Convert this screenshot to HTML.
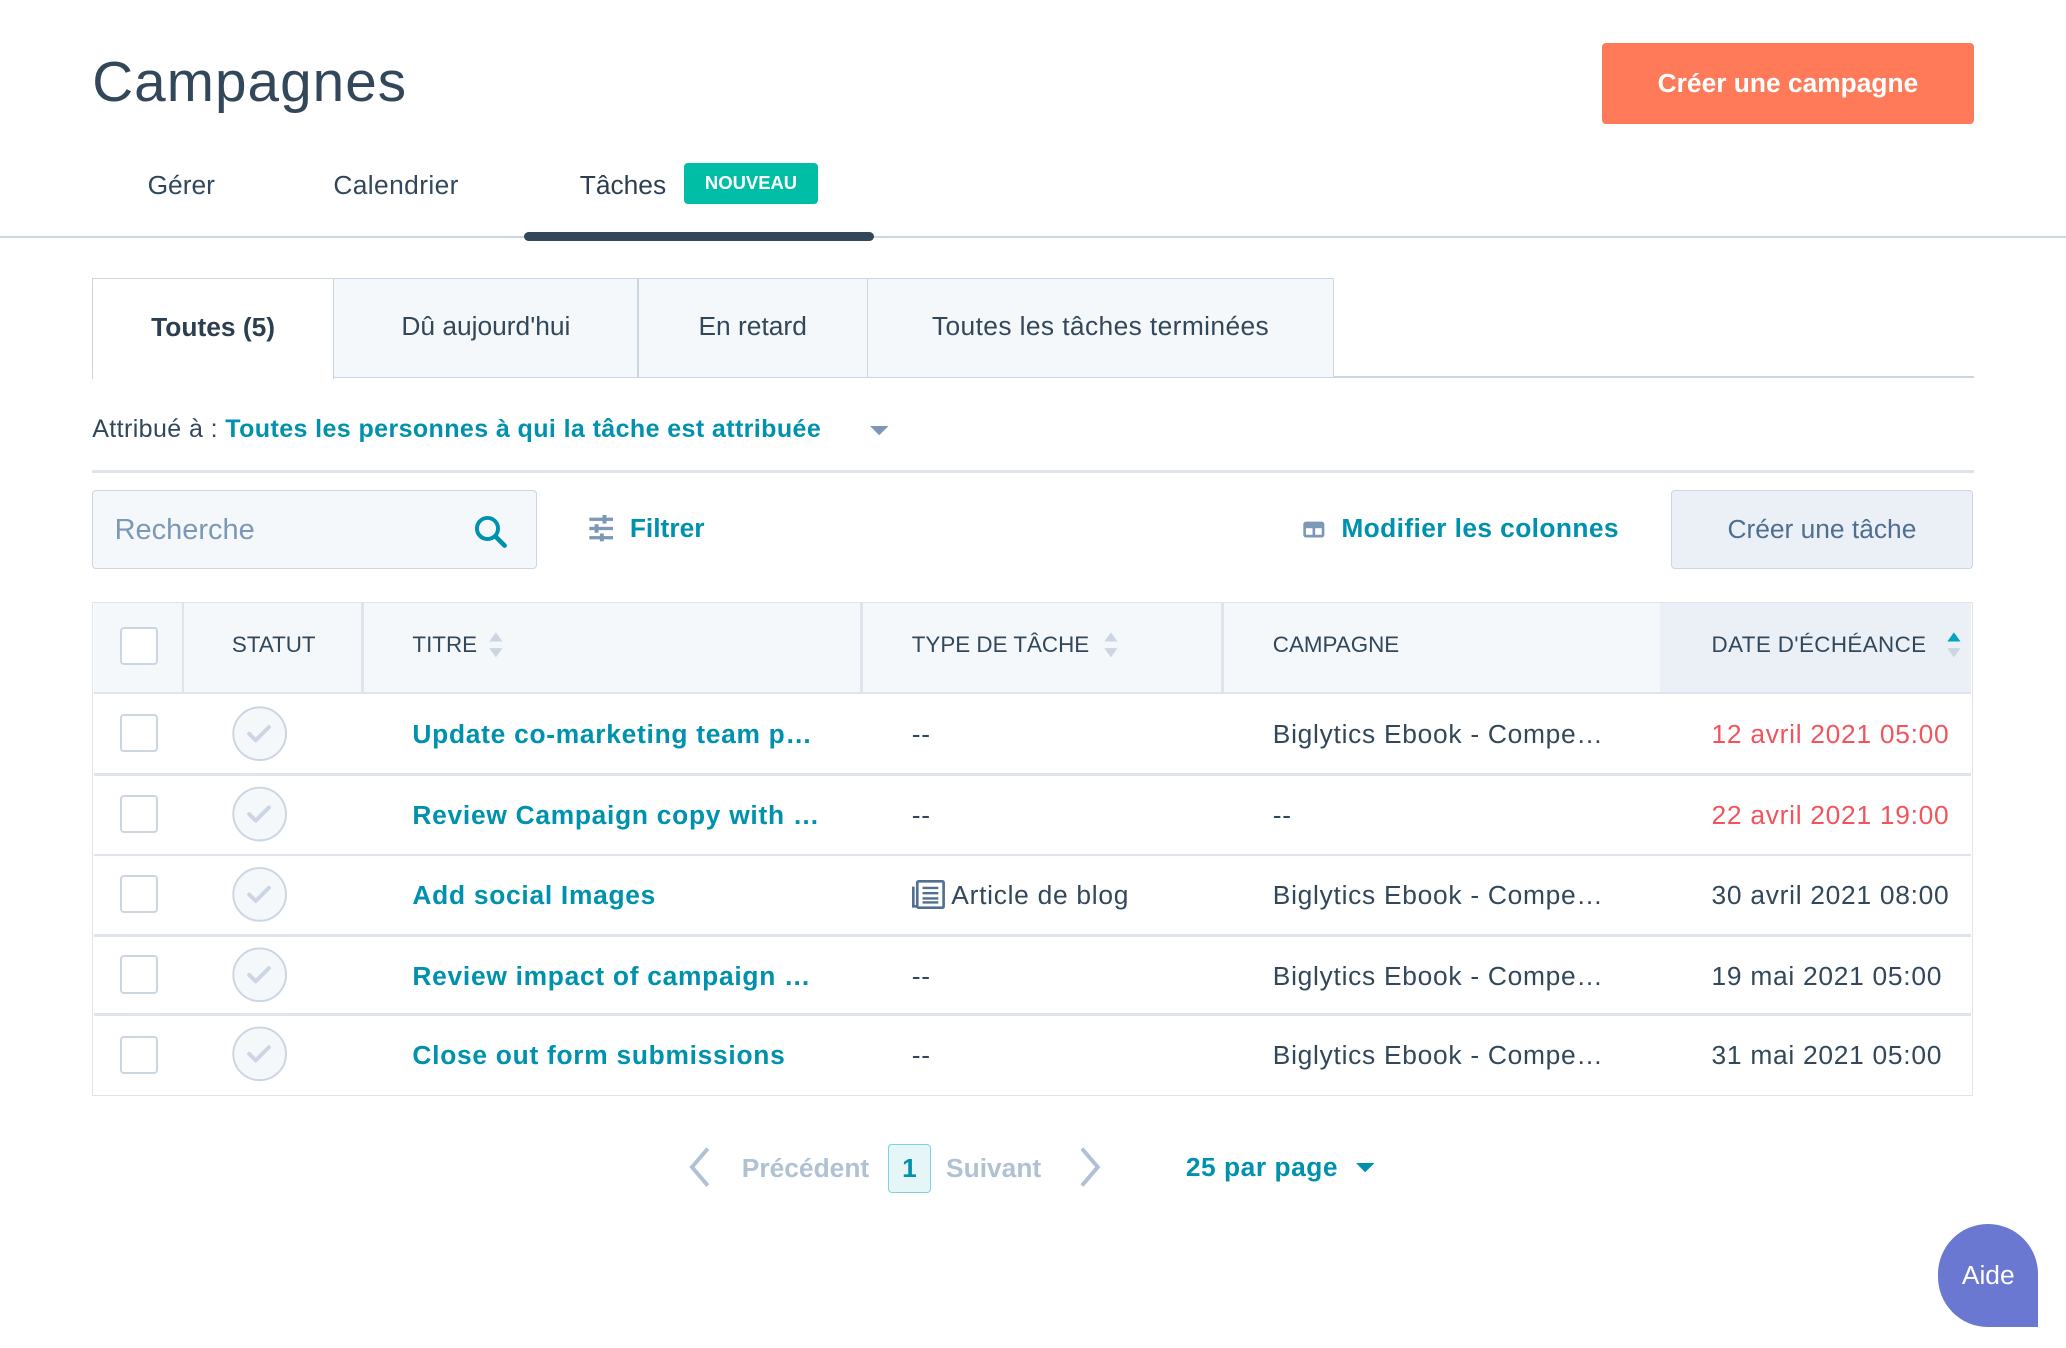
<!DOCTYPE html>
<html><head><meta charset="utf-8">
<style>
html,body{margin:0;padding:0;background:#fff;overflow:hidden}
body{width:2066px;height:1348px}
#r{position:relative;width:1568px;height:1023px;zoom:1.3176;font-family:"Liberation Sans",sans-serif;color:#33475b}
.a{position:absolute;white-space:nowrap}
.teal{color:#0091ae}
.row{letter-spacing:0.55px}
.cb{position:absolute;width:26px;height:26px;border:2px solid #cbd6e2;border-radius:3px;background:#fff}
.hl{position:absolute;height:2px;background:#dfe3eb}
.vl{position:absolute;width:2px;background:#dfe3eb}
</style></head><body><div id="r">

<div class="a" style="left:70px;top:38px;font-size:43px;font-weight:normal;letter-spacing:0.8px;color:#33475b">Campagnes</div>
<div class="a" style="left:1216px;top:33px;width:282px;height:61px;background:#ff7a59;border-radius:3px;color:#fff;font-size:20px;font-weight:bold;line-height:61px;text-align:center">Créer une campagne</div>

<div class="a" style="left:112px;top:129px;font-size:20px">Gérer</div>
<div class="a" style="left:253px;top:129px;font-size:20px;letter-spacing:0.3px">Calendrier</div>
<div class="a" style="left:440px;top:129px;font-size:20px;color:#2d3e50">Tâches</div>
<div class="a" style="left:519px;top:124px;width:102px;height:31px;background:#00bda5;border-radius:3px;color:#fff;font-size:14px;font-weight:bold;line-height:31px;text-align:center">NOUVEAU</div>
<div class="a" style="left:0;top:179px;width:1568px;height:2px;background:#cbd6e2"></div>
<div class="a" style="left:398px;top:176px;width:265px;height:7px;background:#33475b;border-radius:4px"></div>

<div class="a" style="left:253px;top:285px;width:1245px;height:2px;background:#cbd6e2"></div>
<div class="a" style="left:70px;top:211px;width:182px;height:76px;background:#fff;border:1px solid #cbd6e2;border-bottom:none;font-size:20px;font-weight:bold;line-height:74px;text-align:center;color:#2d3e50">Toutes (5)</div>
<div class="a" style="left:253px;top:211px;width:230px;height:74px;background:#f5f8fa;border:1px solid #cbd6e2;font-size:20px;line-height:72px;text-align:center">Dû aujourd'hui</div>
<div class="a" style="left:484px;top:211px;width:173px;height:74px;background:#f5f8fa;border:1px solid #cbd6e2;font-size:20px;line-height:72px;text-align:center">En retard</div>
<div class="a" style="left:658px;top:211px;width:353px;height:74px;background:#f5f8fa;border:1px solid #cbd6e2;font-size:20px;line-height:72px;text-align:center;letter-spacing:0.3px">Toutes les tâches terminées</div>

<div class="a" style="left:70px;top:315px;font-size:19px;letter-spacing:0.3px">Attribué à : <span class="teal" style="font-weight:bold">Toutes les personnes à qui la tâche est attribuée</span></div>
<svg class="a" style="left:660px;top:323px" width="14" height="8"><path d="M0 0h14L7 7z" fill="#7c98b6"/></svg>
<div class="a" style="left:70px;top:357px;width:1428px;height:2px;background:#dfe3eb"></div>

<div class="a" style="left:70px;top:372px;width:336px;height:58px;background:#f5f8fa;border:1px solid #cbd6e2;border-radius:3px"></div>
<div class="a" style="left:87px;top:390px;font-size:22px;color:#7c98b6">Recherche</div>
<svg class="a" style="left:359px;top:390px" width="28" height="28" viewBox="0 0 28 28"><circle cx="11" cy="11" r="8" fill="none" stroke="#0091ae" stroke-width="3"/><path d="M17 17l7 7" stroke="#0091ae" stroke-width="3.5" stroke-linecap="round"/></svg>

<svg class="a" style="left:446px;top:391px" width="20" height="20" viewBox="0 0 20 20" fill="#7c98b6"><rect x="1" y="2" width="18" height="2.5"/><rect x="1" y="9" width="18" height="2.5"/><rect x="1" y="16" width="18" height="2.5"/><rect x="11" y="0" width="3" height="6.5"/><rect x="5" y="7" width="3" height="6.5"/><rect x="9" y="14" width="3" height="6"/></svg>
<div class="a teal" style="left:478px;top:389px;font-size:20px;font-weight:bold">Filtrer</div>

<svg class="a" style="left:988px;top:394px" width="18" height="16" viewBox="0 0 18 16"><rect x="1" y="2" width="16" height="12" rx="2" fill="#7c98b6"/><rect x="3" y="7" width="5" height="5" fill="#fff"/><rect x="10" y="7" width="5" height="5" fill="#fff"/></svg>
<div class="a teal" style="left:1018px;top:389px;font-size:20px;font-weight:bold;letter-spacing:0.3px">Modifier les colonnes</div>

<div class="a" style="left:1268px;top:372px;width:228px;height:58px;background:#eaf0f6;border:1px solid #cbd6e2;border-radius:3px;font-size:20px;line-height:58px;text-align:center;color:#506e91">Créer une tâche</div>

<!-- table -->
<div class="a" style="left:70px;top:457px;width:1426px;height:373px;border:1px solid #dfe3eb;background:#fff"></div>
<div class="a" style="left:71px;top:458px;width:1425px;height:67px;background:#f5f8fa"></div>
<div class="a" style="left:1260px;top:458px;width:236px;height:67px;background:#eaf0f6"></div>
<div class="hl" style="left:71px;top:525px;width:1425px"></div>
<div class="vl" style="left:138px;top:458px;height:67px"></div>
<div class="vl" style="left:274px;top:458px;height:67px"></div>
<div class="vl" style="left:653px;top:458px;height:67px"></div>
<div class="vl" style="left:927px;top:458px;height:67px"></div>
<div class="cb" style="left:91px;top:476px"></div>
<div class="a" style="left:176px;top:480px;font-size:17px">STATUT</div>
<div class="a" style="left:313px;top:480px;font-size:17px">TITRE</div>
<svg class="a" style="left:370px;top:479px" width="12" height="22"><path d="M1 8L6 1l5 7zM1 13l5 7 5-7z" fill="#cbd6e2"/></svg>
<div class="a" style="left:692px;top:480px;font-size:17px">TYPE DE TÂCHE</div>
<svg class="a" style="left:837px;top:479px" width="12" height="22"><path d="M1 8L6 1l5 7zM1 13l5 7 5-7z" fill="#cbd6e2"/></svg>
<div class="a" style="left:966px;top:480px;font-size:17px">CAMPAGNE</div>
<div class="a" style="left:1299px;top:480px;font-size:17px;letter-spacing:0.3px">DATE D'ÉCHÉANCE</div>
<svg class="a" style="left:1477px;top:479px" width="12" height="22"><path d="M1 8L6 1l5 7z" fill="#00a4bd"/><path d="M1 13l5 7 5-7z" fill="#cbd6e2"/></svg>

<div class="hl" style="left:71px;top:587px;width:1425px"></div>
<div class="hl" style="left:71px;top:648px;width:1425px"></div>
<div class="hl" style="left:71px;top:709px;width:1425px"></div>
<div class="hl" style="left:71px;top:769px;width:1425px"></div>

<div class="cb" style="left:91px;top:542px"></div><div class="cb" style="left:91px;top:603px"></div><div class="cb" style="left:91px;top:664px"></div><div class="cb" style="left:91px;top:725px"></div><div class="cb" style="left:91px;top:786px"></div>

<svg class="a" style="left:176px;top:536px" width="44" height="290" viewBox="0 0 44 290">
<g fill="#f5f8fa" stroke="#cbd6e2" stroke-width="1.5"><circle cx="21" cy="21" r="20"/><circle cx="21" cy="82" r="20"/><circle cx="21" cy="143" r="20"/><circle cx="21" cy="204" r="20"/><circle cx="21" cy="264" r="20"/></g>
<g fill="none" stroke="#cbd6e2" stroke-width="3" stroke-linecap="round" stroke-linejoin="round"><path d="M13 21l5 5 10-10"/><path d="M13 82l5 5 10-10"/><path d="M13 143l5 5 10-10"/><path d="M13 204l5 5 10-10"/><path d="M13 264l5 5 10-10"/></g></svg>

<div class="a teal row" style="left:313px;top:546px;font-size:20px;font-weight:bold">Update co-marketing team p…</div>
<div class="a teal row" style="left:313px;top:607px;font-size:20px;font-weight:bold">Review Campaign copy with …</div>
<div class="a teal row" style="left:313px;top:668px;font-size:20px;font-weight:bold">Add social Images</div>
<div class="a teal row" style="left:313px;top:729px;font-size:20px;font-weight:bold">Review impact of campaign …</div>
<div class="a teal row" style="left:313px;top:789px;font-size:20px;font-weight:bold">Close out form submissions</div>

<div class="a row" style="left:692px;top:546px;font-size:20px">--</div>
<div class="a row" style="left:692px;top:607px;font-size:20px">--</div>
<svg class="a" style="left:692px;top:668px" width="25" height="22" viewBox="0 0 25 22"><rect x="4" y="1" width="20" height="20" rx="1" fill="none" stroke="#516f90" stroke-width="2"/><path d="M1 5v15h3" fill="none" stroke="#516f90" stroke-width="2"/><path d="M8 6h12M8 10h12M8 14h12M8 17h12" stroke="#516f90" stroke-width="1.8"/></svg>
<div class="a row" style="left:722px;top:668px;font-size:20px">Article de blog</div>
<div class="a row" style="left:692px;top:729px;font-size:20px">--</div>
<div class="a row" style="left:692px;top:789px;font-size:20px">--</div>

<div class="a row" style="left:966px;top:546px;font-size:20px">Biglytics Ebook - Compe…</div>
<div class="a row" style="left:966px;top:607px;font-size:20px">--</div>
<div class="a row" style="left:966px;top:668px;font-size:20px">Biglytics Ebook - Compe…</div>
<div class="a row" style="left:966px;top:729px;font-size:20px">Biglytics Ebook - Compe…</div>
<div class="a row" style="left:966px;top:789px;font-size:20px">Biglytics Ebook - Compe…</div>

<div class="a row" style="left:1299px;top:546px;font-size:20px;color:#f2545b">12 avril 2021 05:00</div>
<div class="a row" style="left:1299px;top:607px;font-size:20px;color:#f2545b">22 avril 2021 19:00</div>
<div class="a row" style="left:1299px;top:668px;font-size:20px">30 avril 2021 08:00</div>
<div class="a row" style="left:1299px;top:729px;font-size:20px">19 mai 2021 05:00</div>
<div class="a row" style="left:1299px;top:789px;font-size:20px">31 mai 2021 05:00</div>

<!-- pagination -->
<svg class="a" style="left:522px;top:870px" width="18" height="32"><path d="M15 2L3 16l12 14" fill="none" stroke="#b0c1d4" stroke-width="3"/></svg>
<div class="a" style="left:563px;top:875px;font-size:20px;font-weight:bold;color:#b0c1d4">Précédent</div>
<div class="a" style="left:674px;top:868px;width:31px;height:36px;border:1px solid #7fd1de;background:#e5f5f8;border-radius:3px;font-size:20px;font-weight:bold;line-height:36px;text-align:center;color:#0091ae">1</div>
<div class="a" style="left:718px;top:875px;font-size:20px;font-weight:bold;color:#b0c1d4">Suivant</div>
<svg class="a" style="left:818px;top:870px" width="18" height="32"><path d="M3 2l12 14L3 30" fill="none" stroke="#b0c1d4" stroke-width="3"/></svg>
<div class="a teal" style="left:900px;top:874px;font-size:20px;font-weight:bold;letter-spacing:0.4px">25 par page</div>
<svg class="a" style="left:1029px;top:883px" width="14" height="8"><path d="M0 0h14L7 7z" fill="#0091ae"/></svg>

<div class="a" style="left:1471px;top:929px;width:76px;height:78px;background:#6a78d1;border-radius:38px 38px 0 38px;color:#fff;font-size:20px;line-height:78px;text-align:center">Aide</div>

</div></body></html>
